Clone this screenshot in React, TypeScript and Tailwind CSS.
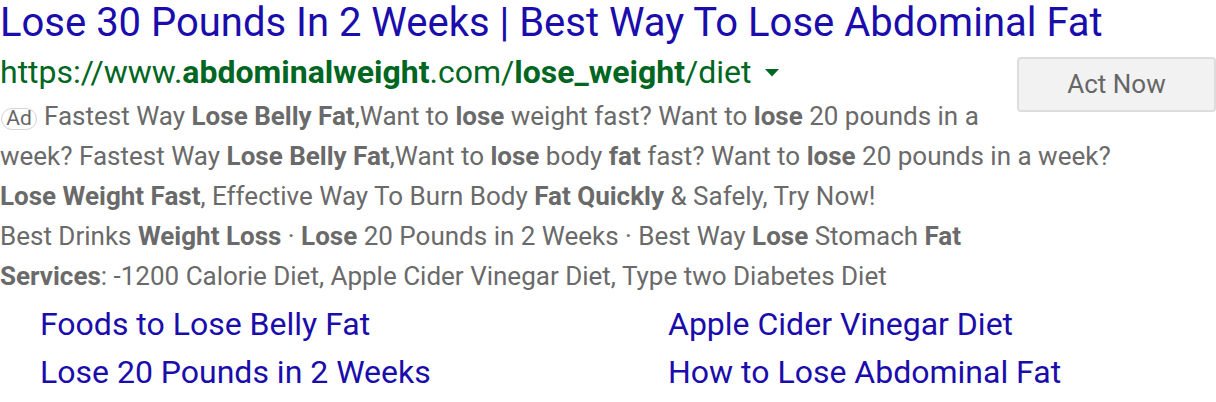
export default function App() {
  return (
    <div className="w-[1216px] h-[402px] bg-white overflow-hidden font-['Roboto',sans-serif]">
      <a className="block text-[40px] leading-[46px] -mb-[2px] text-[#1a0dab] whitespace-nowrap">
        Lose 30 Pounds In 2 Weeks | Best Way To Lose Abdominal Fat
      </a>
      <div>
        <button className="float-right mt-[5px] w-[199px] h-[55px] rounded-[4px] border-2 border-[#dddddd] bg-[#f2f2f2] text-[26px] text-[#666666]">
          Act Now
        </button>
        <div className="mt-[8px] flex items-center text-[32px] leading-[40px] text-[#006621]">
          <span>
            https://www.<b className="font-bold">abdominalweight</b>.com/<b className="font-bold">lose_weight</b>/diet
          </span>
          <svg className="ml-[14px] mt-[2px]" width="14" height="8" viewBox="0 0 14 8">
            <path d="M0 0h14L7 7.5z" fill="#006621" />
          </svg>
        </div>
        <div className="mt-[4px] text-[26px] leading-[40px] text-[#6a6a6a]">
          <p>
            <span className="inline-block w-[36px] h-[22px] mr-[7px] ml-px rounded-full border-[1.5px] border-[#d4d4d4] text-center text-[21px] leading-[19px] text-[#666666]">
              Ad
            </span>
            Fastest Way <b>Lose Belly Fat</b>,Want to <b>lose</b> weight fast? Want to <b>lose</b> 20 pounds in a week? Fastest Way <b>Lose Belly Fat</b>,Want to <b>lose</b> body <b>fat</b> fast? Want to <b>lose</b> 20 pounds in a week?
          </p>
          <p>
            <b>Lose Weight Fast</b>, Effective Way To Burn Body <b>Fat Quickly</b> &amp; Safely, Try Now!
          </p>
          <p>
            Best Drinks <b>Weight Loss</b> · <b>Lose</b> 20 Pounds in 2 Weeks · Best Way <b>Lose</b> Stomach <b>Fat</b>
          </p>
          <p>
            <b>Services</b>: -1200 Calorie Diet, Apple Cider Vinegar Diet, Type two Diabetes Diet
          </p>
        </div>
      </div>
      <div className="mt-[4px] pl-[40px] grid grid-cols-[628px_1fr] text-[32px] leading-[48px] text-[#1a0dab]">
        <a>Foods to Lose Belly Fat</a>
        <a>Apple Cider Vinegar Diet</a>
        <a>Lose 20 Pounds in 2 Weeks</a>
        <a>How to Lose Abdominal Fat</a>
      </div>
    </div>
  );
}
